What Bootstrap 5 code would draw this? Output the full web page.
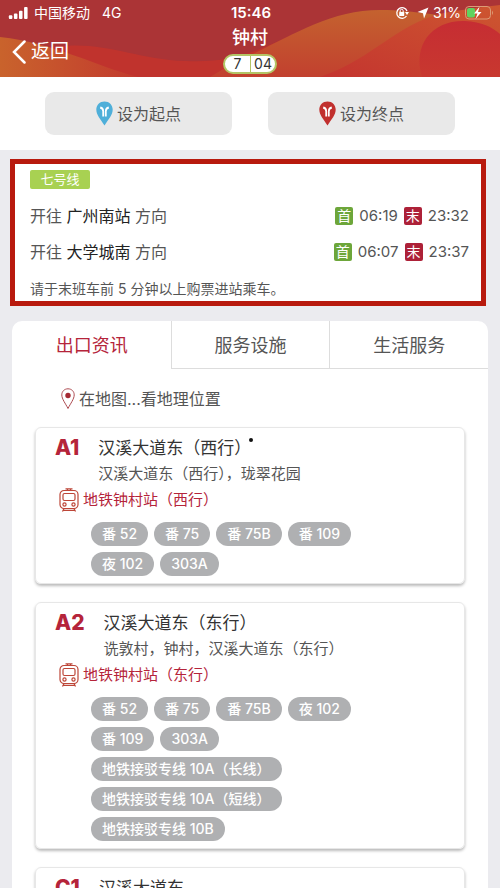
<!DOCTYPE html>
<html lang="zh-CN">
<head>
<meta charset="utf-8">
<meta name="viewport" content="width=device-width, initial-scale=1">
<title>钟村</title>
<link href="https://cdn.jsdelivr.net/npm/bootstrap@5.3.0/dist/css/bootstrap.min.css" rel="stylesheet">
<style>
body { font-family: Inter, "Noto Sans CJK SC", sans-serif; font-size: 15px; line-height: 24px; color: #555; background: #ebebef; }
button { font-family: inherit; }
.app-header { background: #ab3436; height: 77px; color: #fff; }
.header-art { position: absolute; inset: 0; width: 100%; height: 100%; }
.status-row { font-size: 14px; height: 26px; line-height: 26px; padding: 0 6px 0 8px; }
.status-side { flex: 1 1 0; }
.status-time { font-size: 15px; font-weight: 600; }
.title-row { height: 51px; padding: 0 12px; }
.back-link { font-size: 19px; flex: 1 1 0; }
.station-name { font-size: 18px; line-height: 24px; font-weight: 500; }
.station-code { background: #fff; border: 2px solid #b3c566; border-radius: 10px; color: #333; font-size: 14px; line-height: 16px; height: 20px; }
.station-code span { width: 25px; text-align: center; }
.station-code span + span { border-left: 1px solid #b3c566; }
.app-main { scrollbar-width: none; }
.app-main::-webkit-scrollbar { display: none; }
.actions { padding: 15px 45px; gap: 36px; height: 73px; }
.btn-place { background: #e9e9e9; color: #555; font-size: 16px; border-radius: 9px; flex: 1 1 0; --bs-btn-hover-bg: #dedede; }
.times { border: 5px solid #b81a0e; margin: 9px 14px 15px 10px; padding: 6px 12px 2px 15px; }
.line-tag { background: #a8d152; border-radius: 2px; font-size: 13px; line-height: 19px; width: 60px; color: #fff; margin-bottom: 9px; }
.direction { height: 36px; }
.direction-name { font-size: 16px; }
.direction-times { gap: 6px; }
.direction b { font-weight: 400; color: #222; }
.mark-box { width: 18px; height: 18px; border-radius: 2px; font-size: 14px; line-height: 18px; color: #fff; text-align: center; }
.mark-first { background: #6da63a; }
.mark-last { background: #ad2138; }
.notice { font-size: 14px; line-height: 20px; margin-top: 9px; }
.panel { background: #fff; border-radius: 10px 10px 0 0; margin: 0 12px; }
.tab-btn { flex: 1 1 0; height: 48px; border: 0; border-bottom: 1px solid #ddd; border-left: 1px solid #ddd; background: none; color: #555; font-size: 18px; padding: 2px 0 0; }
.tab-btn.active { color: #b5243a; border-color: transparent; }
.map-link { color: #555; font-size: 16px; padding: 18px 0 16px 49px; gap: 4px; }
.exit-list { padding: 0 23px 20px; gap: 18px; }
.exit { border: 1px solid #e7e7e7; border-radius: 6px; box-shadow: 0 2px 3px #bbb; padding: 8px 18px 7px; }
.exit-code { font-size: 21px; font-weight: 800; color: #b5243a; padding-left: 1px; }
.exit-title { font-size: 17px; line-height: 24px; color: #333; font-weight: 400; }
.exit-head { gap: 19px; }
.exit-sub { line-height: 27px; }
.stop-name { color: #b5243a; gap: 4px; height: 25px; padding-left: 5px; }
.chips { gap: 6px; padding: 10px 40px 0 37px; }
.chip { background: #afb0b2; color: #fff; border-radius: 12px; padding: 0 11px; font-size: 14px; font-weight: 500; }
.screen-dot { position: absolute; left: 213px; top: 10px; width: 4px; height: 4px; border-radius: 50%; background: #111; }
</style>
<script src="https://cdn.jsdelivr.net/npm/bootstrap@5.3.0/dist/js/bootstrap.bundle.min.js" defer></script>
</head>
<body>
<svg class="d-none" aria-hidden="true">
  <symbol id="pin" viewBox="0 0 17 25"><path fill="currentColor" d="M8.500 .5C3.800 .5 .3 4 .3 8.600c0 5.500 4.200 9.500 8.200 16 4-6.500 8.200-10.500 8.200-16C16.700 4 13.200 .5 8.500 .5z"/><path d="M4.200 6.500Q7.200 7.200 7.200 10.200V15.500M12.800 6.500Q9.800 7.200 9.800 10.200V15.500" fill="none" stroke="#fff" stroke-width="1.800"/></symbol>
  <symbol id="tram" viewBox="0 0 20 24"><g fill="none" stroke="#bd4638" stroke-width="1.200"><rect x="1" y="2.500" width="18" height="18" rx="4"/><rect x="4" y="5.500" width="12" height="7" rx="1.500"/><circle cx="5.500" cy="16.500" r="1.600"/><circle cx="14.500" cy="16.500" r="1.600"/><path d="M6.500 .8h7M8.500 .8v1.700M11.500 .8v1.700M5 20.500l-1.500 3M15 20.500l1.500 3M4.500 22.300h11"/></g></symbol>
</svg>
<div class="d-flex flex-column vh-100 overflow-hidden">
  <header class="app-header position-relative flex-shrink-0 overflow-hidden">
    <svg class="header-art" viewBox="0 0 500 77" preserveAspectRatio="none" aria-hidden="true">
      <defs>
        <linearGradient id="gOrange" x1="0" y1="0" x2="0" y2="1"><stop offset="0" stop-color="#c4622f"/><stop offset="1" stop-color="#c2402f"/></linearGradient>
        <linearGradient id="gLeft" x1="0" y1="0" x2="1" y2="0"><stop offset="0" stop-color="#c9632c"/><stop offset="1" stop-color="#c23a2e"/></linearGradient>
        <linearGradient id="gBand" x1="0" y1="1" x2="1" y2="0"><stop offset="0" stop-color="#c4342f"/><stop offset="1" stop-color="#cd5630"/></linearGradient>
        <linearGradient id="gHill" x1="0" y1="0" x2="0" y2="1"><stop offset="0" stop-color="#c62d33"/><stop offset="1" stop-color="#c8382f"/></linearGradient>
      </defs>
      <path fill="#c0332d" d="M40 49C100 37 130 59 185 61C230 63 250 54 290 36L500 30V77H40z"/>
      <path fill="url(#gLeft)" d="M0 37C55 43 95 66 138 77H0z"/>
      <path fill="url(#gOrange)" d="M235 62C285 41 325 10 380 10C430 10 460 24 500 14V77H210z"/>
      <path fill="url(#gBand)" d="M320 77C375 59 400 18 455 11C475 8 490 6 500 5V77z"/>
      <path fill="url(#gHill)" d="M422 77C412 45 432 20 465 21C482 22 492 27 500 34V77z"/>
    </svg>
    <div class="status-row position-relative d-flex align-items-center">
      <div class="status-side d-flex align-items-center">
        <svg class="me-1" width="22" height="12" viewBox="0 0 22 13" fill="#fff" aria-hidden="true"><rect y="9" width="3.800" height="4" rx="1"/><rect x="5.500" y="7" width="3.800" height="6" rx="1"/><rect x="11" y="4" width="3.800" height="9" rx="1"/><rect x="16.500" width="3.800" height="13" rx="1"/></svg>
        <span>中国移动</span><span class="ms-2 ps-1">4G</span>
      </div>
      <span class="status-time">15:46</span>
      <div class="status-side d-flex align-items-center justify-content-end">
        <svg width="14" height="14" viewBox="0 0 14 14" aria-hidden="true"><path d="M11.500 10A5.300 5.300 0 1 1 12 5" fill="none" stroke="#fff" stroke-width="1.300"/><path d="M10 6h4l-2 3z" fill="#fff"/><rect x="4.200" y="6" width="5" height="4" rx=".6" fill="#fff"/><path d="M5.200 6V4.800a1.500 1.500 0 0 1 3 0V6" fill="none" stroke="#fff"/></svg>
        <svg class="ms-2" width="12" height="12" viewBox="0 0 12 12" aria-hidden="true"><path fill="#fff" d="M11.500 .5L7 11.500 6 6.200.5 5z"/></svg>
        <span class="ms-1">31%</span>
        <svg class="ms-1" width="29" height="14" viewBox="0 0 29 14" aria-hidden="true"><rect x=".5" y=".5" width="25" height="12.500" rx="3.500" fill="none" stroke="#dc9b76"/><path fill="#dc9b76" d="M27 4.500q2 2.300 0 4.600z"/><rect x="2" y="2" width="8" height="9.500" rx="2" fill="#5fd35f"/><path fill="#fff" d="M14.500 .8L9 7.500h3.500L10.500 13l6-7H13z"/></svg>
      </div>
    </div>
    <div class="title-row position-relative d-flex">
      <a href="#" class="back-link d-flex align-items-center text-white text-decoration-none gap-1"><svg width="15" height="24" viewBox="0 0 15 24" aria-hidden="true"><path d="M12.500 1.500L2 12l10.500 10.500" fill="none" stroke="#fff" stroke-width="2.500" stroke-linecap="round"/></svg>返回</a>
      <div class="d-flex flex-column align-items-center">
        <h1 class="station-name m-0">钟村</h1>
        <div class="station-code d-flex mt-1"><span>7</span><span>04</span></div>
      </div>
      <div class="status-side"></div>
    </div>
  </header>
  <main class="app-main flex-grow-1 overflow-auto">
    <div class="actions d-flex bg-white">
      <button type="button" class="btn btn-place border-0 p-0 d-flex align-items-center justify-content-center gap-1"><svg width="17" height="25" color="#4fafd9" aria-hidden="true"><use href="#pin"/></svg>设为起点</button>
      <button type="button" class="btn btn-place border-0 p-0 d-flex align-items-center justify-content-center gap-1"><svg width="17" height="25" color="#c1302e" aria-hidden="true"><use href="#pin"/></svg>设为终点</button>
    </div>
    <section class="times bg-white">
      <div class="line-tag text-center">七号线</div>
      <div class="direction d-flex align-items-center justify-content-between">
        <span class="direction-name">开往 <b>广州南站</b> 方向</span>
        <span class="direction-times d-flex align-items-center"><span class="mark-box mark-first">首</span><span>06:19</span><span class="mark-box mark-last">末</span><span>23:32</span></span>
      </div>
      <div class="direction d-flex align-items-center justify-content-between">
        <span class="direction-name">开往 <b>大学城南</b> 方向</span>
        <span class="direction-times d-flex align-items-center"><span class="mark-box mark-first">首</span><span>06:07</span><span class="mark-box mark-last">末</span><span>23:37</span></span>
      </div>
      <p class="notice mb-0">请于末班车前 5 分钟以上购票进站乘车。</p>
    </section>
    <section class="panel">
      <div class="d-flex" role="tablist">
        <button type="button" class="tab-btn active" role="tab" aria-selected="true">出口资讯</button>
        <button type="button" class="tab-btn" role="tab" aria-selected="false">服务设施</button>
        <button type="button" class="tab-btn" role="tab" aria-selected="false">生活服务</button>
      </div>
      <a href="#" class="map-link d-flex align-items-center text-decoration-none"><svg width="14" height="22" viewBox="0 0 14 22" aria-hidden="true"><path d="M7 .8C3.300 .8.8 3.500.8 6.900.8 11 4.500 15.500 7 20.500 9.500 15.500 13.200 11 13.200 6.900 13.200 3.500 10.700.8 7 .8z" fill="none" stroke="#ad4a50"/><circle cx="7" cy="7.500" r="2.700" fill="#a52a33"/></svg>在地图...看地理位置</a>
      <div class="exit-list d-flex flex-column">
        <article class="exit position-relative">
          <div class="d-flex exit-head"><span class="exit-code">A1</span><div><h2 class="exit-title m-0">汉溪大道东（西行）</h2><div class="exit-sub">汉溪大道东（西行），珑翠花园</div></div></div>
          <div class="stop-name d-flex align-items-center"><svg width="20" height="24" aria-hidden="true"><use href="#tram"/></svg>地铁钟村站（西行）</div>
          <div class="chips d-flex flex-wrap"><span class="chip">番 52</span><span class="chip">番 75</span><span class="chip">番 75B</span><span class="chip">番 109</span><span class="chip">夜 102</span><span class="chip">303A</span></div>
          <span class="screen-dot"></span>
        </article>
        <article class="exit">
          <div class="d-flex exit-head"><span class="exit-code">A2</span><div><h2 class="exit-title m-0">汉溪大道东（东行）</h2><div class="exit-sub">诜敦村，钟村，汉溪大道东（东行）</div></div></div>
          <div class="stop-name d-flex align-items-center"><svg width="20" height="24" aria-hidden="true"><use href="#tram"/></svg>地铁钟村站（东行）</div>
          <div class="chips d-flex flex-wrap"><span class="chip">番 52</span><span class="chip">番 75</span><span class="chip">番 75B</span><span class="chip">夜 102</span><span class="chip">番 109</span><span class="chip">303A</span><span class="chip">地铁接驳专线 10A（长线）</span><span class="chip">地铁接驳专线 10A（短线）</span><span class="chip">地铁接驳专线 10B</span></div>
        </article>
        <article class="exit">
          <div class="d-flex exit-head"><span class="exit-code">C1</span><h2 class="exit-title m-0">汉溪大道东</h2></div>
        </article>
      </div>
    </section>
  </main>
</div>
</body>
</html>
